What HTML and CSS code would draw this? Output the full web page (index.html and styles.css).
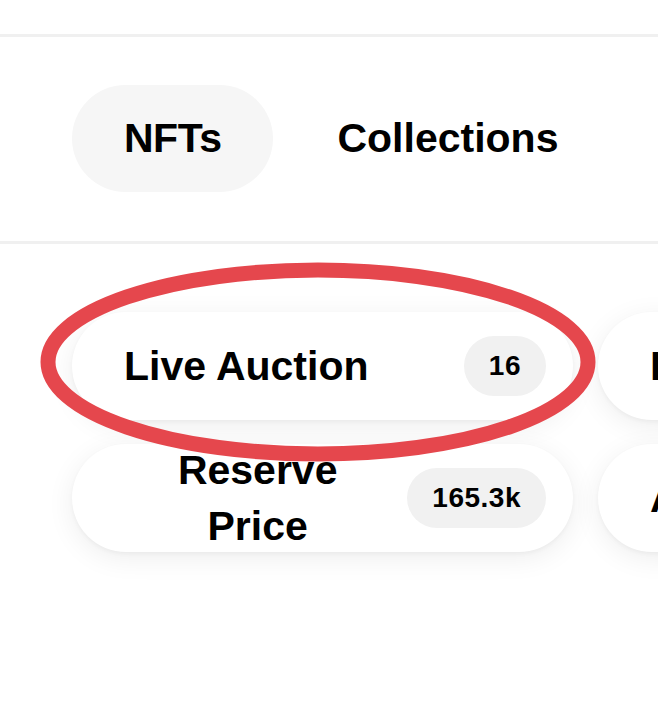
FILE: index.html
```html
<!DOCTYPE html>
<html lang="en">
<head>
<meta charset="utf-8">
<title>Explore</title>
<link rel="stylesheet" href="styles.css">
</head>
<body>
  <div class="topbar"></div>
  <nav class="tabs">
    <a class="tab tab-active">NFTs</a>
    <a class="tab">Collections</a>
  </nav>
  <section class="filters">
    <div class="chip chip-marked">
      <span class="chip-label">Live Auction</span>
      <span class="badge">16</span>
      <svg class="annotation" viewBox="0 0 556 200" width="556" height="200" aria-hidden="true">
        <ellipse cx="278" cy="100" rx="270" ry="92" fill="none" stroke="#e5474d" stroke-width="15"/>
      </svg>
    </div>
    <div class="chip">
      <span class="chip-label">Reserve Price</span>
      <span class="badge">165.3k</span>
    </div>
    <div class="chip">
      <span class="chip-label">Buy Now</span>
      <span class="badge">48.2k</span>
    </div>
    <div class="chip">
      <span class="chip-label">Accepts Offers</span>
      <span class="badge">9.1k</span>
    </div>
  </section>
</body>
</html>
```

FILE: styles.css
```css
html, body {
  margin: 0;
  padding: 0;
  background: #ffffff;
  overflow: hidden;
}

body {
  font-family: "Liberation Sans", Arial, sans-serif;
  color: #000;
  width: 658px;
  height: 713px;
}

.topbar {
  height: 34px;
  border-bottom: 3px solid #f0f0f0;
}

.tabs {
  display: flex;
  gap: 12px;
  padding: 48px 72px 49px;
  border-bottom: 3px solid #f0f0f0;
}

.tab {
  display: flex;
  align-items: center;
  height: 107px;
  padding: 0 52px;
  border-radius: 54px;
  font-size: 41px;
  font-weight: 700;
  color: #000;
  white-space: nowrap;
}

.tab-active {
  background: #f6f6f6;
  letter-spacing: -0.5px;
}

.filters {
  display: grid;
  grid-template-rows: 108px 108px;
  grid-auto-flow: column;
  grid-auto-columns: 501px;
  column-gap: 25px;
  row-gap: 24px;
  padding: 68px 0 0 72px;
}

.chip {
  box-sizing: border-box;
  position: relative;
  display: flex;
  align-items: center;
  justify-content: space-between;
  gap: 16px;
  height: 108px;
  padding: 0 27px 0 52px;
  background: #ffffff;
  border-radius: 54px;
  box-shadow: 0 2px 4px rgba(0, 0, 0, 0.04), 0 6px 28px rgba(0, 0, 0, 0.07);
}

.chip-label {
  font-size: 41px;
  font-weight: 700;
  line-height: 56px;
  text-align: center;
}

.badge {
  flex: none;
  display: flex;
  align-items: center;
  height: 60px;
  padding: 0 25px;
  border-radius: 30px;
  background: #f1f1f1;
  font-size: 28px;
  font-weight: 700;
  letter-spacing: 0.5px;
}

.annotation {
  position: absolute;
  left: -32px;
  top: -50px;
  z-index: 2;
  pointer-events: none;
}
```
